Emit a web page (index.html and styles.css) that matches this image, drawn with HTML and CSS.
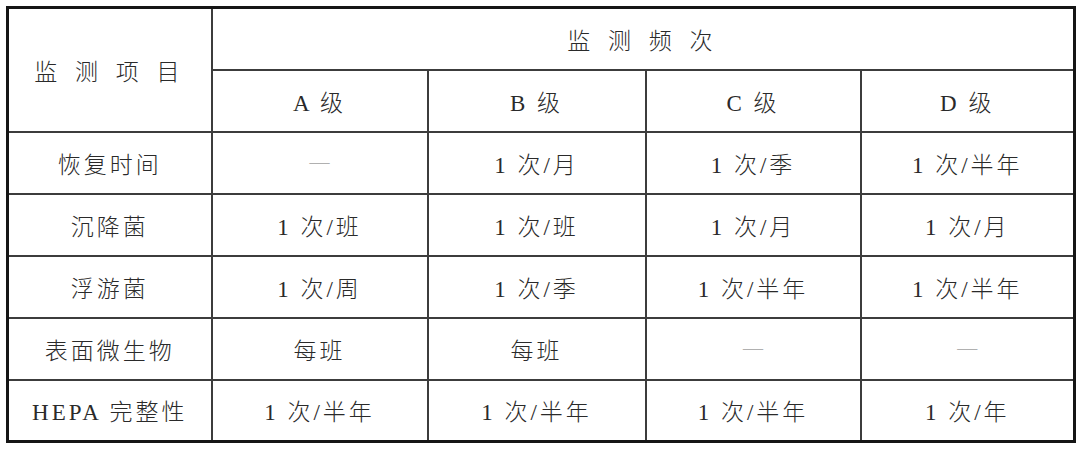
FILE: index.html
```html
<!DOCTYPE html>
<html lang="zh">
<head>
<meta charset="utf-8">
<link rel="stylesheet" href="styles.css">
</head>
<body>
<table class="grid">
  <colgroup>
    <col class="c0"><col class="c1"><col class="c2"><col class="c3"><col class="c4">
  </colgroup>
  <tr>
    <td rowspan="2" class="head wide">监 测 项 目</td>
    <td colspan="4" class="head wide">监 测 频 次</td>
  </tr>
  <tr>
    <td>A 级</td><td>B 级</td><td>C 级</td><td>D 级</td>
  </tr>
  <tr>
    <td>恢复时间</td><td class="dash">—</td><td>1 次/月</td><td>1 次/季</td><td>1 次/半年</td>
  </tr>
  <tr>
    <td>沉降菌</td><td>1 次/班</td><td>1 次/班</td><td>1 次/月</td><td>1 次/月</td>
  </tr>
  <tr>
    <td>浮游菌</td><td>1 次/周</td><td>1 次/季</td><td>1 次/半年</td><td>1 次/半年</td>
  </tr>
  <tr>
    <td>表面微生物</td><td>每班</td><td>每班</td><td class="dash">—</td><td class="dash">—</td>
  </tr>
  <tr>
    <td>HEPA 完整性</td><td>1 次/半年</td><td>1 次/半年</td><td>1 次/半年</td><td>1 次/年</td>
  </tr>
</table>
</body>
</html>
```

FILE: styles.css
```css
html, body {
  margin: 0;
  padding: 0;
  background: #ffffff;
}

body {
  padding: 6px 0 0 6px;
  font-family: "Liberation Serif", "Noto Sans CJK SC", serif;
  color: #2a2a2a;
}

.grid {
  border-collapse: collapse;
  table-layout: fixed;
  width: 1067px;
  border: 3px solid #151515;
}

.c0 { width: 204px; }
.c1 { width: 216px; }
.c2 { width: 218px; }
.c3 { width: 215px; }
.c4 { width: 214px; }

.grid tr {
  height: 62px;
}

.grid td {
  border: 2px solid #3c3c3c;
  text-align: center;
  vertical-align: middle;
  font-size: 23px;
  font-weight: 300;
  letter-spacing: 3px;
  padding: 0;
  white-space: nowrap;
}

.grid .wide {
  letter-spacing: 6px;
}

.grid .dash {
  color: #b0b0b0;
  font-size: 20px;
  letter-spacing: 0;
}
```
